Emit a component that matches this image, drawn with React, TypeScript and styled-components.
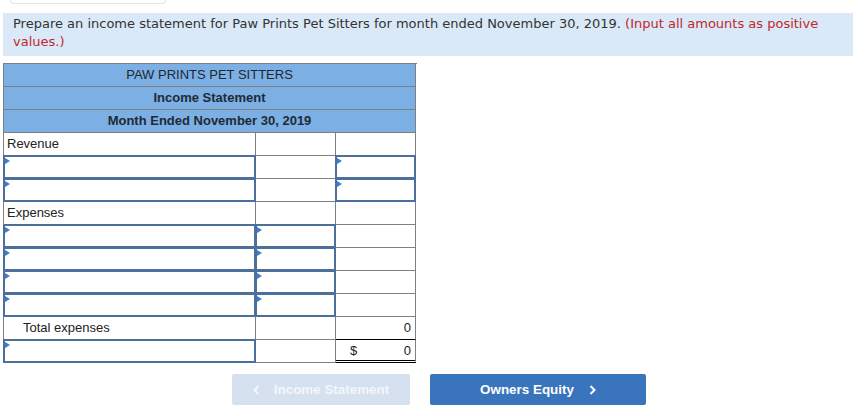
import React from "react";
import styled, { createGlobalStyle } from "styled-components";

const Global = createGlobalStyle`
  html, body { margin: 0; padding: 0; background: #fff; }
  body { font-family: "Liberation Sans", Arial, sans-serif; }
`;

const Page = styled.div`
  width: 867px;
  height: 416px;
  overflow: hidden;
  position: relative;
  display: flex;
  flex-direction: column;
`;

const TopTab = styled.div`
  margin-left: 10px;
  width: 154px;
  height: 3px;
  border: 1px solid #e4e4e4;
  border-top: none;
  border-radius: 0 0 7px 7px;
`;

const Instructions = styled.div`
  margin: 9px 0 0 3px;
  width: 850px;
  box-sizing: border-box;
  padding: 2px 10px 5px 10px;
  background: #dae9f7;
  font-family: "DejaVu Sans", Verdana, sans-serif;
  font-size: 13px;
  line-height: 18px;
  color: #333;
`;

const Red = styled.span`
  color: #c1272d;
`;

const Sheet = styled.div`
  margin: 7px 0 0 3px;
  display: grid;
  grid-template-columns: 252px 80px 80px;
  grid-auto-rows: 23px;
  width: 413px;
  border-left: 1px solid #808080;
  border-top: 1px solid #808080;
  font-size: 13px;
  color: #222;
`;

const Header = styled.div<{ $bold?: boolean }>`
  grid-column: 1 / span 3;
  background: #7cafe3;
  border-right: 1px solid #808080;
  border-bottom: 1px solid #808080;
  display: flex;
  align-items: center;
  justify-content: center;
  padding-bottom: 2px;
  font-weight: ${(p) => (p.$bold ? "bold" : "normal")};
  color: ${(p) => (p.$bold ? "#1f2a36" : "#1d2733")};
`;

const Cell = styled.div<{ $indent?: boolean; $right?: boolean; $under?: boolean; $double?: boolean }>`
  box-sizing: border-box;
  border-right: 1px solid #808080;
  border-bottom: ${(p) => (p.$double ? "3px double #000" : p.$under ? "1px solid #000" : "1px solid #808080")};
  display: flex;
  align-items: center;
  justify-content: ${(p) => (p.$right ? "space-between" : "flex-start")};
  padding: 0 ${(p) => (p.$right ? "4px" : "0")} ${(p) => (p.$double ? "0" : "2px")} ${(p) => (p.$indent ? "19px" : p.$right ? "14px" : "3px")};
  white-space: nowrap;
  position: relative;
`;

const InputCell = styled.div`
  border-right: 1px solid #808080;
  border-bottom: 1px solid #808080;
  position: relative;
`;

const InputBox = styled.div`
  position: absolute;
  inset: -1px -1px -1px -1px;
  border: 2px solid #4d6f9b;
  background: #fff;
`;

const Marker = styled.span`
  position: absolute;
  left: 0;
  top: 1px;
  width: 0;
  height: 0;
  border-top: 3px solid transparent;
  border-bottom: 3px solid transparent;
  border-left: 5px solid #3c7ccb;
`;

const Buttons = styled.div`
  display: flex;
  gap: 20px;
  margin: 11px 0 0 232px;
`;

const NavButton = styled.button<{ $disabled?: boolean }>`
  height: 31px;
  width: ${(p) => (p.$disabled ? "178px" : "216px")};
  border: none;
  border-radius: 2px;
  background: ${(p) => (p.$disabled ? "#d6e1ef" : "#3a74bc")};
  color: ${(p) => (p.$disabled ? "#f3f6fb" : "#fff")};
  font-family: "Liberation Sans", Arial, sans-serif;
  font-weight: bold;
  font-size: 13.4px;
  display: flex;
  align-items: center;
  justify-content: center;
  gap: ${(p) => (p.$disabled ? "14px" : "15px")};
  padding: 0;
  cursor: pointer;
`;

const Chevron = ({ dir }: { dir: "left" | "right" }) => (
  <svg width="7" height="10" viewBox="0 0 7 10">
    <path
      d={dir === "left" ? "M5.5 1 L1.5 5 L5.5 9" : "M1.5 1 L5.5 5 L1.5 9"}
      fill="none"
      stroke="currentColor"
      strokeWidth="2"
    />
  </svg>
);

const Input = () => (
  <InputCell>
    <InputBox>
      <Marker />
    </InputBox>
  </InputCell>
);

export default function App() {
  return (
    <Page>
      <Global />
      <TopTab />
      <Instructions>
        Prepare an income statement for Paw Prints Pet Sitters for month ended November 30, 2019.{" "}
        <Red>(Input all amounts as positive values.)</Red>
      </Instructions>
      <Sheet>
        <Header>PAW PRINTS PET SITTERS</Header>
        <Header $bold>Income Statement</Header>
        <Header $bold>Month Ended November 30, 2019</Header>

        <Cell>Revenue</Cell>
        <Cell />
        <Cell />

        <Input />
        <Cell />
        <Input />

        <Input />
        <Cell />
        <Input />

        <Cell>Expenses</Cell>
        <Cell />
        <Cell />

        {[0, 1, 2, 3].map((i) => (
          <React.Fragment key={i}>
            <Input />
            <Input />
            <Cell />
          </React.Fragment>
        ))}

        <Cell $indent>Total expenses</Cell>
        <Cell />
        <Cell $right $under>
          <span />
          <span>0</span>
        </Cell>

        <Input />
        <Cell />
        <Cell $right $double>
          <span>$</span>
          <span>0</span>
        </Cell>
      </Sheet>
      <Buttons>
        <NavButton $disabled>
          <Chevron dir="left" />
          Income Statement
        </NavButton>
        <NavButton>
          Owners Equity
          <Chevron dir="right" />
        </NavButton>
      </Buttons>
    </Page>
  );
}
